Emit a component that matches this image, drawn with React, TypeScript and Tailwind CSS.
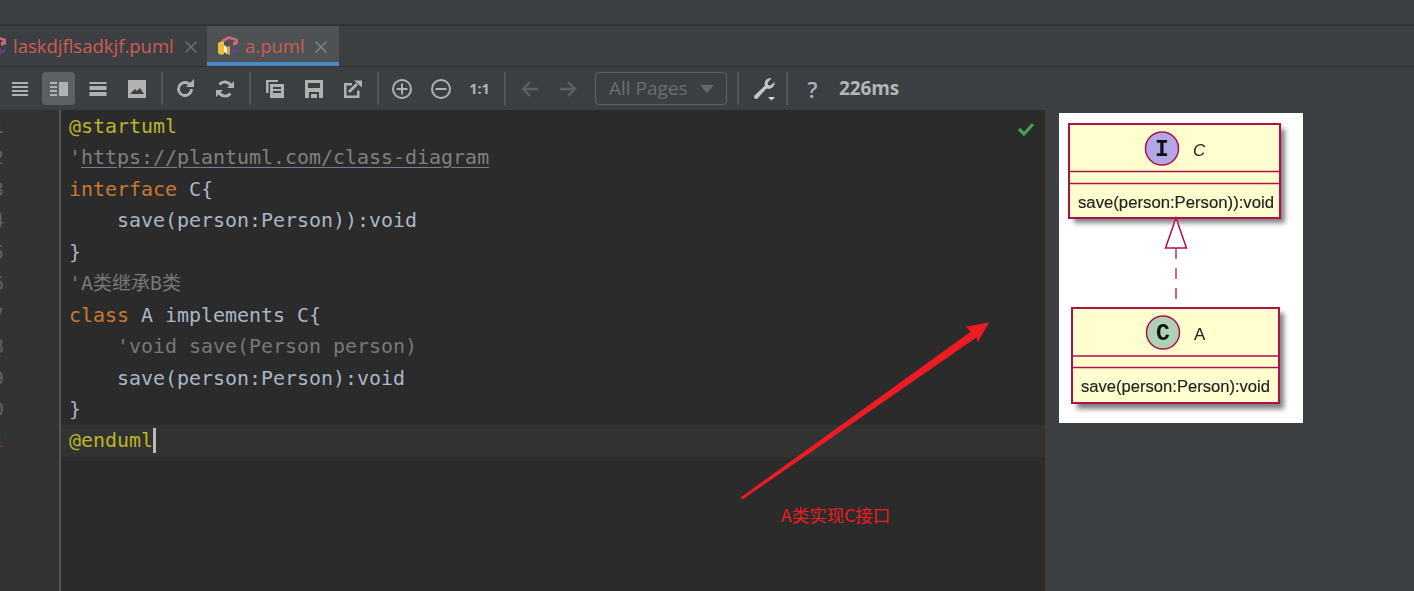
import React from "react";

const ui = { fontFamily: '"Open Sans", "Noto Sans", sans-serif' };
const mono = { fontFamily: '"DejaVu Sans Mono", "Noto Sans CJK SC", monospace' };

const Sep = ({ cls }: { cls: string }) => <div className={`w-[2px] h-[33px] bg-[#51575a] shrink-0 ${cls}`} />;

const I = ({ children, cls = "" }: { children: React.ReactNode; cls?: string }) => (
  <div className={`w-[33px] h-[33px] flex items-center justify-center shrink-0 rounded-[4px] ${cls}`}>
    <svg width="20" height="20" viewBox="0 0 20 20" fill="#afb1b3" stroke="none">{children}</svg>
  </div>
);

const CubeIcon = () => (
  <svg width="22" height="22" viewBox="0 0 22 22" className="shrink-0">
    <path d="M0 7l6-3 0 14-3 1-3-2z" fill="#e9c13c" />
    <path d="M6 9l3 2v7l-3-2z" fill="#f6efd8" />
    <path d="M9 11l3-1v9l-3-1z" fill="#d9a92f" />
    <path d="M3 4l8-4 9 3v5l-5 2V6l3-1-7-2-5 3z" fill="#c96a7c" />
    <path d="M13 13l2-1v3l5-2v2l-7 4z" fill="#6e3f94" />
  </svg>
);

const X = ({ c }: { c: string }) => (
  <svg width="14" height="14" viewBox="0 0 14 14" className="shrink-0">
    <path d="M1.500 1.500l11 11M12.500 1.500l-11 11" stroke={c} strokeWidth="1.400" />
  </svg>
);

const T = ({ c, children }: { c: string; children: React.ReactNode }) => <span className={c}>{children}</span>;
const H = ({ children }: { children: React.ReactNode }) => <span className="text-[19px]">{children}</span>;

const lines: React.ReactNode[] = [
  <T c="text-[#bbb529]">@startuml</T>,
  <T c="text-[#808080]">'<span className="underline decoration-[#6b7f99] underline-offset-[3px]">https://plantuml.com/class-diagram</span></T>,
  <><T c="text-[#cc7832]">interface</T> <T c="text-[#a9b7c6]">C{"{"}</T></>,
  <T c="text-[#a9b7c6]">{"    save(person:Person)):void"}</T>,
  <T c="text-[#a9b7c6]">{"}"}</T>,
  <T c="text-[#787878]">'A<H>类继承</H>B<H>类</H></T>,
  <><T c="text-[#cc7832]">class</T> <T c="text-[#a9b7c6]">A implements C{"{"}</T></>,
  <T c="text-[#787878]">{"    'void save(Person person)"}</T>,
  <T c="text-[#a9b7c6]">{"    save(person:Person):void"}</T>,
  <T c="text-[#a9b7c6]">{"}"}</T>,
  <T c="text-[#bbb529]">@enduml</T>,
];

const boxText = { fontFamily: '"Liberation Sans", Arial, sans-serif' };

const Diagram = () => (
  <svg width="244" height="310" viewBox="0 0 244 310" className="bg-white shrink-0 blur-[0.5px]">
    <defs>
      <filter id="sh" x="-10%" y="-10%" width="125%" height="125%">
        <feGaussianBlur stdDeviation="2.500" />
      </filter>
    </defs>
    <rect x="15" y="16" width="211" height="94" fill="#808080" filter="url(#sh)" />
    <rect x="18" y="200" width="207" height="96" fill="#808080" filter="url(#sh)" />
    <rect x="10" y="11" width="211" height="94" fill="#fefece" stroke="#b01048" strokeWidth="2" />
    <path d="M10 58.500H221M10 70.500H221" stroke="#b01048" strokeWidth="1.700" />
    <circle cx="103" cy="35.500" r="16.500" fill="#b4a7e5" stroke="#b01048" strokeWidth="1.500" />
    <text x="103" y="43" textAnchor="middle" fontSize="23" fontWeight="700" fontFamily='"Liberation Mono", monospace' fill="#111">I</text>
    <text x="134" y="43" fontSize="17" fontStyle="italic" fill="#222" style={boxText}>C</text>
    <text x="19" y="95" fontSize="16" fill="#222" stroke="#222" strokeWidth="0.150" style={boxText} textLength="196" lengthAdjust="spacingAndGlyphs">save(person:Person)):void</text>
    <path d="M117 135V187" stroke="#b8386a" strokeWidth="1.500" strokeDasharray="11 9" />
    <path d="M117 105L106.500 135H127.500Z" fill="#fff" stroke="#b01048" strokeWidth="1.500" />
    <rect x="13" y="195" width="207" height="95" fill="#fefece" stroke="#b01048" strokeWidth="2" />
    <path d="M13 243H220M13 254.500H220" stroke="#b01048" strokeWidth="1.700" />
    <circle cx="104" cy="219.500" r="16.500" fill="#add1b2" stroke="#b01048" strokeWidth="1.500" />
    <text x="104" y="227" textAnchor="middle" fontSize="23" fontWeight="700" fontFamily='"Liberation Mono", monospace' fill="#111">C</text>
    <text x="135" y="227" fontSize="17" fill="#222" style={boxText}>A</text>
    <text x="22" y="279" fontSize="16" fill="#222" stroke="#222" strokeWidth="0.150" style={boxText} textLength="189" lengthAdjust="spacingAndGlyphs">save(person:Person):void</text>
  </svg>
);

export default function App() {
  return (
    <div className="relative w-[1414px] h-[591px] overflow-hidden bg-[#3c3f41] flex flex-col">
      <div className="h-[24px] bg-[#3c3f41] shrink-0" />
      <div className="h-[2px] bg-[#323232] shrink-0" />
      {/* tabs */}
      <div className="h-[41px] flex shrink-0 border-b-[1px] border-[#323232] overflow-hidden" style={ui}>
        <div className="w-[207px] flex items-center shrink-0 pt-[1px]">
          <div className="ml-[-14px] mr-[5px]"><CubeIcon /></div>
          <span className="text-[#cf5b56] text-[18.500px] leading-none w-[160px] whitespace-nowrap">laskdjflsadkjf.puml</span>
          <span className="ml-[11px]"><X c="#6e7275" /></span>
        </div>
        <div className="w-[132px] flex items-center shrink-0 bg-[#4e5254] border-b-[4px] border-[#4a88c7] pl-[11px] pt-[5px]">
          <CubeIcon />
          <span className="text-[#cf5b56] text-[18.500px] leading-none ml-[5px] w-[59px] whitespace-nowrap">a.puml</span>
          <span className="ml-[10px]"><X c="#85898c" /></span>
        </div>
      </div>
      {/* toolbar */}
      <div className="h-[43px] flex items-center shrink-0 pl-[3px]" style={ui}>
        <div className="flex items-center gap-[6px]">
          <I><path d="M2 3h16v2H2zM2 7h16v2H2zM2 11h16v2H2zM2 15h16v2H2z" /></I>
          <I cls="bg-[#5c6164]"><path d="M1 3h7v2H1zM1 7h7v2H1zM1 11h7v2H1zM1 15h7v2H1zM10 3h9v14h-9z" /></I>
          <I><path d="M1.500 3h17v2h-17zM1.500 7h17v4h-17zM1.500 13h17v4h-17z" /></I>
          <I><path fillRule="evenodd" d="M1 1h18v18H1zM3 15h14l-4-6-3 3-2-2z" /><path d="M3 15h14v2H3z" /></I>
        </div>
        <Sep cls="ml-[8px] mr-[5px]" />
        <div className="flex items-center gap-[7px]">
          <I>
            <path d="M16.500 10a6.500 6.500 0 1 1-2-4.700" fill="none" stroke="#afb1b3" strokeWidth="2.800" />
            <path d="M11 8h8V0z" />
          </I>
          <I>
            <path d="M16.500 7.500A7 7 0 0 0 4.500 5.500M3.500 12.500A7 7 0 0 0 15.500 14.500" fill="none" stroke="#afb1b3" strokeWidth="2.800" />
            <path d="M19 2v7h-7zM1 18v-7h7z" />
          </I>
        </div>
        <Sep cls="ml-[8px] mr-[7px]" />
        <div className="flex items-center gap-[6px]">
          <I><path fillRule="evenodd" d="M1 1h12v2H3.500v11H1zM5 5h14v14H5zM8 8v2h8V8zM8 12v2h8v-2z" /></I>
          <I><path fillRule="evenodd" d="M1 1h18v18H1zM4 4v5h12V4zM5 13v6h10v-6zM7 15h6v4H7z" /></I>
          <I>
            <path d="M1 4h8v2.500H3.500V16.500H14v-5h2.500V19H1z" />
            <path d="M6 13l8-8" stroke="#afb1b3" strokeWidth="3" />
            <path d="M11 1.500h8v7z" />
          </I>
        </div>
        <Sep cls="ml-[8px] mr-[6px]" />
        <div className="flex items-center gap-[6px]">
          <I><circle cx="10" cy="10" r="9" fill="none" stroke="#afb1b3" strokeWidth="2" /><path d="M4.500 9h11v2h-11zM9 4.500h2v11H9z" /></I>
          <I><circle cx="10" cy="10" r="9" fill="none" stroke="#afb1b3" strokeWidth="2" /><path d="M4.500 9h11v2h-11z" /></I>
          <div className="w-[33px] text-center text-[#afb1b3] text-[14.500px] font-bold shrink-0">1:1</div>
        </div>
        <Sep cls="ml-[8px] mr-[6px]" />
        <div className="flex items-center gap-[7px]">
          <I><path d="M11 3L4 10l7 7M4 10h15" fill="none" stroke="#5c6164" strokeWidth="2.400" /></I>
          <I><path d="M9 3l7 7-7 7M16 10H1" fill="none" stroke="#5c6164" strokeWidth="2.400" /></I>
        </div>
        <div className="ml-[10px] w-[132px] h-[33px] rounded-[4px] border-[1.500px] border-[#5e6265] flex items-center pl-[13px] shrink-0">
          <span className="text-[#6a6e71] text-[19px] leading-none">All Pages</span>
          <span className="ml-[12px] w-0 h-0 border-l-[7px] border-r-[7px] border-t-[8px] border-l-transparent border-r-transparent border-t-[#63676a]" />
        </div>
        <Sep cls="ml-[10px] mr-[7px]" />
        <div className="w-[33px] h-[33px] flex items-center justify-center shrink-0">
          <svg width="26" height="26" viewBox="0 0 26 26">
            <path d="M21.500 2.500l-4 4 .5 2.500 2.500.5 4-3.500c.5 4-3 8-8 6.500L7.500 22.500c-2 1.500-4.500-.5-3-3l10.500-10C13.500 5 17.500 1.500 21.500 2.500z" fill="#c4c6c8" />
            <path d="M18 21h7l-3.500 3.500z" fill="#d8d8d8" />
          </svg>
        </div>
        <Sep cls="ml-[7px] mr-[8px]" />
        <div className="w-[33px] text-center text-[#afb1b3] text-[22px] font-semibold leading-none shrink-0">?</div>
        <span className="ml-[10px] text-[#b4b6b8] text-[19px] font-bold leading-none tracking-[-0.1px]">226ms</span>
      </div>
      {/* main */}
      <div className="flex-1 flex min-h-0">
        <div className="w-[61px] bg-[#313335] border-r-[2px] border-[#555555] shrink-0 overflow-hidden pt-[1px]" style={mono}>
          {lines.map((_, i) => (
            <div key={i} className={`h-[31.450px] leading-[31.450px] text-[19px] flex justify-end pr-[55px] whitespace-nowrap ${i === 10 ? "text-[#7a3434]" : "text-[#606366]"}`}>{i + 1}</div>
          ))}
        </div>
        <div className="w-[984px] bg-[#2b2b2b] shrink-0 relative pt-[1px]" style={mono}>
          {lines.map((l, i) => (
            <div key={i} className={`h-[31.450px] leading-[31.450px] text-[19.950px] pl-[8px] whitespace-pre ${i === 10 ? "bg-[#323232]" : ""}`}>
              {l}
              {i === 10 && <span className="inline-block w-[3px] h-[25px] bg-[#bbbbbb] align-[-6px]" />}
            </div>
          ))}
          <svg width="18" height="14" viewBox="0 0 18 14" className="absolute left-[956px] top-[12px]">
            <path d="M2 7l5 5 9-10" fill="none" stroke="#499c54" strokeWidth="3.200" />
          </svg>
        </div>
        <div className="flex-1 pl-[14px] pt-[3px]">
          <Diagram />
        </div>
      </div>
      {/* annotation */}
      <svg width="280" height="200" viewBox="0 0 280 200" className="absolute left-[730px] top-[310px]">
        <path d="M10.800 187.300L240.700 21.700 236 16.700 259.300 12.300 247.300 32.700 246.700 27.300 12.500 189.500Z" fill="#ed1c24" />
      </svg>
      <div className="absolute left-[781px] top-[503px] text-[17.500px] leading-[23px] text-[#ed1c24] whitespace-nowrap" style={{ fontFamily: '"Noto Sans CJK SC", sans-serif' }}>A类实现C接口</div>
    </div>
  );
}
